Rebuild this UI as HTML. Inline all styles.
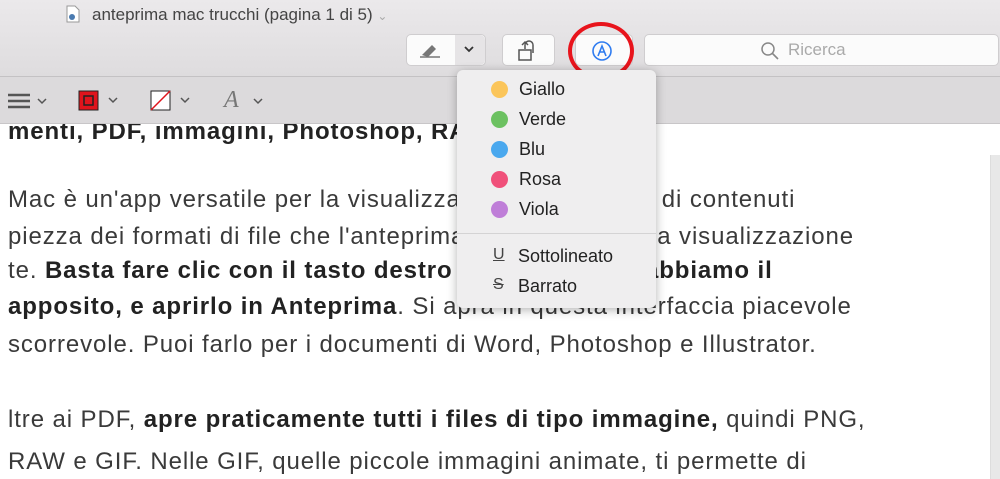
<!DOCTYPE html>
<html><head><meta charset="utf-8"><style>
body{margin:0;width:1000px;height:479px;overflow:hidden;position:relative;font-family:"Liberation Sans",sans-serif;background:#fff}
.top{position:absolute;left:0;top:0;width:1000px;height:76px;background:linear-gradient(#ebe9eb,#dedcde);border-bottom:1px solid #c4c2c4}
.bar2{position:absolute;left:0;top:77px;width:1000px;height:46px;background:#dcdadc;border-bottom:1px solid #c8c6c8}
.btn{position:absolute;top:34px;height:32px;background:#fbfbfb;border:1px solid #cfcdcf;border-radius:5px;box-sizing:border-box}
.doc{position:absolute;left:0;top:124px;width:990px;height:355px;background:#fff;overflow:hidden}
.t{position:absolute;left:8px;font-size:24px;color:#3a3a3a;white-space:nowrap;letter-spacing:0.9px}
b{color:#222}
.menu{position:absolute;left:457px;top:70px;width:199px;height:238px;background:#efeeef;border-radius:6px;box-shadow:0 2px 10px rgba(0,0,0,.3)}
.mi{position:absolute;left:62px;font-size:18px;color:#222}
.dot{position:absolute;left:34px;width:17px;height:17px;border-radius:50%}
</style></head><body>
<div class="top">
 <svg style="position:absolute;left:66px;top:5px" width="14" height="18"><path d="M1 1h8l4 4v12H1z" fill="#fff" stroke="#999"/><circle cx="6" cy="12" r="3" fill="#4a7ab0"/></svg>
 <div style="position:absolute;left:92px;top:5px;font-size:17px;color:#444">anteprima mac trucchi (pagina 1 di 5) <span style="color:#aaa;font-size:12px">⌄</span></div>
 <div class="btn" style="left:406px;width:80px"></div>
 <div style="position:absolute;left:455px;top:35px;width:30px;height:30px;background:#e6e4e6;border-radius:0 5px 5px 0"></div>
 <svg style="position:absolute;left:418px;top:41px" width="26" height="18"><path d="M4 14L14 4l4 4-8 8z" fill="#777"/><path d="M2 16h20" stroke="#777" stroke-width="1.5"/></svg>
 <svg style="position:absolute;left:463px;top:44px" width="12" height="10"><path d="M2 3l4 4 4-4" stroke="#333" stroke-width="1.8" fill="none"/></svg>
 <div class="btn" style="left:502px;width:53px"></div>
 <svg style="position:absolute;left:516px;top:39px" width="26" height="24"><rect x="3" y="11" width="12" height="10" fill="none" stroke="#555" stroke-width="1.5"/><path d="M9 10V6a4 4 0 0 1 8 0v8" fill="none" stroke="#555" stroke-width="1.5"/><path d="M6 6l3-3 3 3" fill="none" stroke="#555" stroke-width="1.5"/></svg>
 <div class="btn" style="left:575px;width:58px"></div>
 <svg style="position:absolute;left:590px;top:39px" width="24" height="24"><circle cx="12" cy="12" r="9" fill="none" stroke="#2f7cf0" stroke-width="1.6"/><path d="M8 17l4-10 4 10M10 13h4" fill="none" stroke="#2f7cf0" stroke-width="1.6"/></svg>
 <div style="position:absolute;left:568px;top:22px;width:66px;height:58px;border:4px solid #e8141c;border-radius:50%;box-sizing:border-box"></div>
 <div class="btn" style="left:644px;width:355px"></div>
 <svg style="position:absolute;left:760px;top:41px" width="20" height="20"><circle cx="8" cy="8" r="6" fill="none" stroke="#888" stroke-width="1.5"/><path d="M12.5 12.5L18 18" stroke="#888" stroke-width="1.6"/></svg>
 <div style="position:absolute;left:788px;top:40px;font-size:17px;color:#aaa">Ricerca</div>
</div>
<div class="bar2">
 <svg style="position:absolute;left:8px;top:16px" width="50" height="16"><path d="M0 2h22M0 8h22M0 14h22" stroke="#555" stroke-width="2.5"/><path d="M30 6l4 4 4-4" stroke="#555" stroke-width="1.5" fill="none"/></svg>
 <svg style="position:absolute;left:78px;top:13px" width="50" height="22"><rect x="1" y="1" width="19" height="19" fill="#e0141c" stroke="#222"/><rect x="6" y="6" width="9" height="9" fill="none" stroke="#222" stroke-width="1.5"/><path d="M31 8l4 4 4-4" stroke="#555" stroke-width="1.5" fill="none"/></svg>
 <svg style="position:absolute;left:150px;top:13px" width="50" height="22"><rect x="1" y="1" width="19" height="19" fill="#fff" stroke="#222"/><path d="M1 20L20 1" stroke="#e0141c" stroke-width="1.5"/><path d="M31 8l4 4 4-4" stroke="#555" stroke-width="1.5" fill="none"/></svg>
 <div style="position:absolute;left:224px;top:10px;font-family:'Liberation Serif',serif;font-style:italic;font-size:24px;color:#777">A</div>
 <svg style="position:absolute;left:252px;top:20px" width="14" height="10"><path d="M2 2l4 4 4-4" stroke="#555" stroke-width="1.5" fill="none"/></svg>
</div>
<div class="doc">
 <div class="t" style="top:-6px;font-weight:bold;color:#222">menti, PDF, immagini, Photoshop, RAW</div>
 <div class="t" style="top:62px">Mac è un'app versatile per la visualizzazione</div>
 <div class="t" style="top:62px;left:648px">i di contenuti</div>
 <div class="t" style="top:99px">piezza dei formati di file che l'anteprima</div>
 <div class="t" style="top:99px;left:651px">la visualizzazione</div>
 <div class="t" style="top:133px">te. <b>Basta fare clic con il tasto destro su</b></div>
 <div class="t" style="top:133px;left:645px"><b>abbiamo il</b></div>
 <div class="t" style="top:169px"><b>apposito, e aprirlo in Anteprima</b>. Si apra in questa interfaccia piacevole</div>
 <div class="t" style="top:207px">scorrevole. Puoi farlo per i documenti di Word, Photoshop e Illustrator.</div>
 <div class="t" style="top:282px">ltre ai PDF, <b>apre praticamente tutti i files di tipo immagine,</b> quindi PNG,</div>
 <div class="t" style="top:324px">RAW e GIF. Nelle GIF, quelle piccole immagini animate, ti permette di</div>
</div>
<div style="position:absolute;left:990px;top:155px;width:10px;height:324px;background:#e8e8e8;border-left:1px solid #ddd"></div>
<div class="menu">
 <div class="dot" style="top:11px;background:#fbc55a"></div><div class="mi" style="top:9px">Giallo</div>
 <div class="dot" style="top:41px;background:#6cc161"></div><div class="mi" style="top:39px">Verde</div>
 <div class="dot" style="top:71px;background:#4aa8ee"></div><div class="mi" style="top:69px">Blu</div>
 <div class="dot" style="top:101px;background:#f0507a"></div><div class="mi" style="top:99px">Rosa</div>
 <div class="dot" style="top:131px;background:#bf7ed8"></div><div class="mi" style="top:129px">Viola</div>
 <div style="position:absolute;left:0;top:163px;width:199px;height:1px;background:#d4d3d4"></div>
 <div style="position:absolute;left:36px;top:176px;font-size:16px;color:#444;text-decoration:underline">U</div><div class="mi" style="top:176px;left:61px">Sottolineato</div>
 <div style="position:absolute;left:36px;top:206px;font-size:16px;color:#444;text-decoration:line-through">S</div><div class="mi" style="top:206px;left:61px">Barrato</div>
</div>
</body></html>
